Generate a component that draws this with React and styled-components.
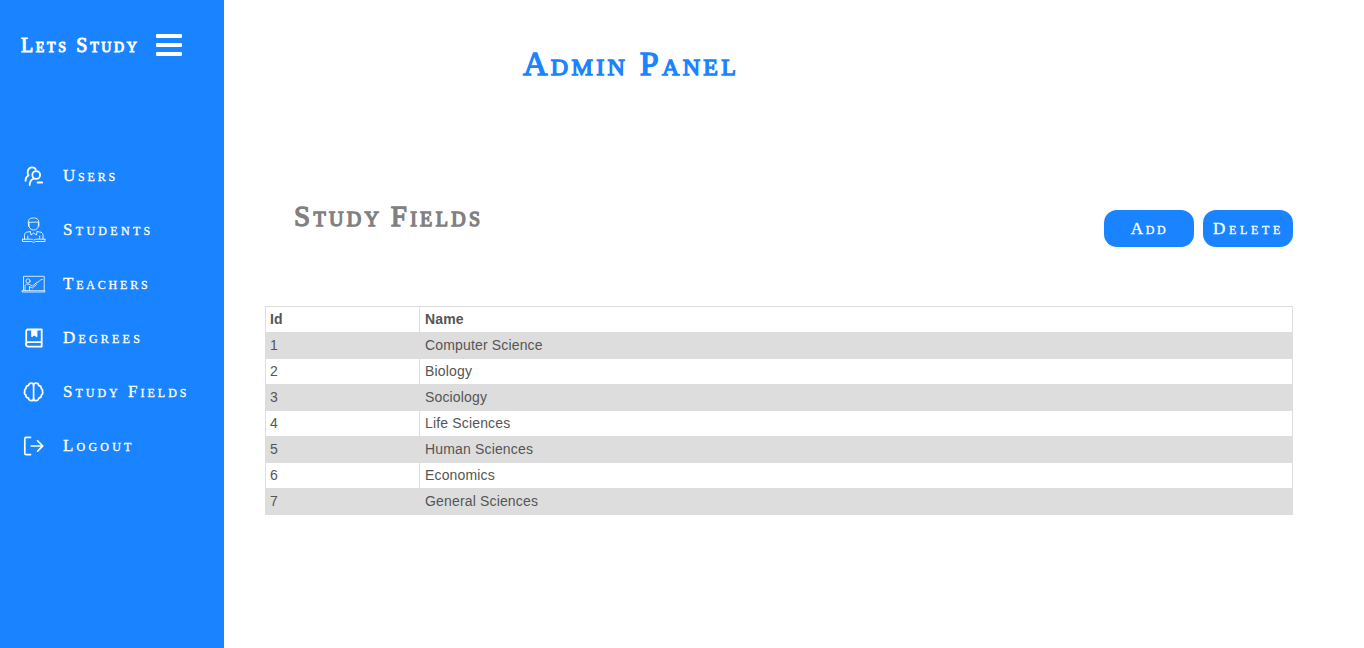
import React from 'react';
import styled, { createGlobalStyle } from 'styled-components';

const BLUE = '#1a83ff';

const GlobalStyle = createGlobalStyle`
  * { box-sizing: border-box; }
  html, body { margin: 0; padding: 0; background: #fff; overflow: hidden; }
`;

const Page = styled.div`
  display: flex;
  width: 100%;
  height: 100vh;
`;

const Sidebar = styled.aside`
  flex: 0 0 224px;
  background: ${BLUE};
  color: #fff;
`;

const Brand = styled.div`
  display: flex;
  align-items: center;
  height: 88px;
  padding-left: 21px;
`;

const Caps = styled.span`
  font-family: 'Liberation Serif', serif;
  font-variant: small-caps;
  font-weight: 400;
  white-space: nowrap;
  line-height: 1;
  font-size: ${(p) => p.$size}px;
  letter-spacing: ${(p) => p.$spacing}px;
  word-spacing: ${(p) => p.$word || 0}px;
  -webkit-text-stroke: ${(p) => p.$stroke || 0.3}px currentColor;
`;

const BrandName = styled(Caps)`
  width: 135px;
  padding-top: 1px;
`;

const MenuIcon = styled.div`
  display: flex;
  flex-direction: column;
  justify-content: space-between;
  width: 26px;
  height: 22px;
  margin-top: 1px;
  & > i {
    height: 4px;
    background: #fff;
    border-radius: 1px;
  }
`;

const Nav = styled.nav`
  display: flex;
  flex-direction: column;
  margin-top: 60px;
`;

const NavItem = styled.a`
  display: flex;
  align-items: center;
  height: 54px;
  padding-left: 21px;
  color: #fff;
`;

const Icon = styled.svg`
  width: 26px;
  height: 28px;
  margin: 1px 16px 0 0;
  fill: none;
  stroke: #fff;
  stroke-width: ${(p) => p.$stroke || 2};
  stroke-linecap: round;
  stroke-linejoin: round;
`;

const Main = styled.main`
  flex: 1;
  padding: 0 71px 0 41px;
`;

const Title = styled.h1`
  margin: 0;
  height: 92px;
  padding: 47px 0 0 258px;
  line-height: 1;
  font-size: 32px;
  color: ${BLUE};
`;

const Toolbar = styled.div`
  display: flex;
  justify-content: space-between;
  align-items: flex-start;
  height: 214px;
  padding: 108px 0 0 29px;
`;

const Heading = styled.h2`
  margin: 0;
  padding-top: 2px;
  font-size: 28px;
  line-height: 1;
  color: #808080;
`;

const Actions = styled.div`
  display: flex;
  gap: 9px;
  padding-top: 10px;
`;

const Button = styled.button`
  display: flex;
  align-items: center;
  justify-content: center;
  width: 90px;
  height: 37px;
  padding: 0 0 0 1px;
  border: 0;
  border-radius: 13px;
  background: ${BLUE};
  color: #fff;
`;

const Table = styled.table`
  width: 1028px;
  border-collapse: collapse;
  table-layout: fixed;
  font: 14px/17px 'Liberation Sans', Arial, sans-serif;
  letter-spacing: 0.16px;
  color: #555;
`;

const Row = styled.tr`
  height: 26px;
  background: ${(p) => (p.$shaded ? '#ddd' : '#fff')};
`;

const Cell = styled.td`
  width: ${(p) => p.$width || 'auto'};
  height: 26px;
  padding: 0 5px;
  padding-left: ${(p) => (p.$width ? 4 : 5)}px;
  border: 1px solid #ddd;
  text-align: left;
  font-weight: ${(p) => (p.$head ? 700 : 400)};
`;

const UsersIcon = () => (
  <Icon viewBox="0 0 26 28" $stroke={1.8}>
    <circle cx="15.2" cy="13" r="3.9" />
    <path d="M8.7 23c0-3.3 1.5-5.4 4-6.4M4.5 18.8c0-2.6 1-4.4 3-5.3C5.5 10 7 5.3 11.2 5.3c1.6 0 2.8.7 3.5 2M16.5 20.5h4.7" />
  </Icon>
);

const StudentIcon = () => (
  <Icon viewBox="0 0 26 28" $stroke={0.85}>
    <path d="M7.6 8.8C6.2 4.5 8.7 1.8 11 2.2c3-1 8 .4 6.8 5.8M7.6 6.4c3-.2 6-.3 10-.3M8 7v2.3c0 3 2.2 4.7 4.7 4.7s4.7-1.7 4.7-4.7V7M7.5 8.2v2M17.9 8.2v2" />
    <path d="M9.2 15.6l-3.8.6c-1.4.5-1.8 1.5-1.9 3.2V23M16.2 15.6l3.8.6c1.5.5 1.9 1.5 2 3.2V23M9.2 15.6l.8 3.4 2.7-2 2.7 2 .8-3.4M6.8 20v2.5M18.7 20v2.5" />
    <path d="M1.5 23.2h8.7c1.4 0 2 .4 2.5 1 .5-.6 1.1-1 2.5-1h8.8M1.5 23.2v2.3h9.2c.8 0 1 .8 2 .8s1.2-.8 2-.8H24v-2.3" />
  </Icon>
);

const TeacherIcon = () => (
  <Icon viewBox="0 0 26 28" $stroke={0.8}>
    <path d="M2.5 20.5V6.3h20.7v14.2M1.5 20.7h22.3v1.3H1.5z" />
    <circle cx="7" cy="11" r="2.1" />
    <path d="M4 20.5v-4.2c0-1.4 1-2.1 2.2-2.1h2l3 2 3.5-2.8M8.5 16.5v4M8.7 17l2.7 1 4.2-3.6M15 13l3-1.4 1.6-1.8 1.8-.5" />
  </Icon>
);

const DegreeIcon = () => (
  <Icon viewBox="0 0 26 28" $stroke={1.8}>
    <path d="M5.2 20.3V7.2c0-1 .7-1.7 1.7-1.7h13.8v17.1H7.2a2.2 2.2 0 0 1 0-4.5h13.5" />
    <path d="M10.8 5.5v7l2.5-1.7 2.5 1.7v-7z" fill="#fff" strokeWidth="1.2" />
  </Icon>
);

const BrainIcon = () => (
  <Icon viewBox="0 0 26 28" $stroke={1.7}>
    <path d="M12.6 7.2c0-1.2-1-2-2.4-2-1.6 0-2.7 1-2.7 2.4-1.7 0-2.7 1.2-2.5 2.9-1.3.7-1.6 1.9-1.2 3-.7 1.3-.4 2.9 1 3.5-.1 1.7 1 2.8 2.6 3 .2 1.7 1.3 2.7 2.8 2.7 1.4 0 2.4-.8 2.4-2z" />
    <path d="M12.6 7.2c0-1.2 1-2 2.4-2 1.6 0 2.7 1 2.7 2.4 1.7 0 2.7 1.2 2.5 2.9 1.3.7 1.6 1.9 1.2 3 .7 1.3.4 2.9-1 3.5.1 1.7-1 2.8-2.6 3-.2 1.7-1.3 2.7-2.8 2.7-1.4 0-2.4-.8-2.4-2" />
  </Icon>
);

const LogoutIcon = () => (
  <Icon viewBox="0 0 26 28" $stroke={1.7}>
    <path d="M9.5 5.3H5.2c-.9 0-1.4.6-1.4 1.4v14.6c0 .8.5 1.4 1.4 1.4h4.3M10.3 14h11.2M16.6 8.8l5.2 5.2-5.2 5.2" />
  </Icon>
);

const links = [
  { label: 'Users', icon: UsersIcon, spacing: 2.8 },
  { label: 'Students', icon: StudentIcon, spacing: 3.3 },
  { label: 'Teachers', icon: TeacherIcon, spacing: 2.8 },
  { label: 'Degrees', icon: DegreeIcon, spacing: 3.2 },
  { label: 'Study Fields', icon: BrainIcon, spacing: 3 },
  { label: 'Logout', icon: LogoutIcon, spacing: 3.2 },
];

const fields = [
  'Computer Science',
  'Biology',
  'Sociology',
  'Life Sciences',
  'Human Sciences',
  'Economics',
  'General Sciences',
];

export default function App() {
  return (
    <Page>
      <GlobalStyle />
      <Sidebar>
        <Brand>
          <BrandName $size={20} $spacing={2.65} $stroke={1}>Lets Study</BrandName>
          <MenuIcon><i /><i /><i /></MenuIcon>
        </Brand>
        <Nav>
          {links.map(({ label, icon: Glyph, spacing }) => (
            <NavItem key={label}>
              <Glyph />
              <Caps $size={17} $spacing={spacing}>{label}</Caps>
            </NavItem>
          ))}
        </Nav>
      </Sidebar>
      <Main>
        <Title><Caps $size={34} $spacing={3.3} $stroke={1.3}>Admin Panel</Caps></Title>
        <Toolbar>
          <Heading><Caps $size={29} $spacing={3.3} $word={-2} $stroke={1.3}>Study Fields</Caps></Heading>
          <Actions>
            <Button><Caps $size={17} $spacing={2.6}>Add</Caps></Button>
            <Button><Caps $size={17} $spacing={3.7}>Delete</Caps></Button>
          </Actions>
        </Toolbar>
        <Table>
          <thead>
            <Row>
              <Cell as="th" $head $width="154px">Id</Cell>
              <Cell as="th" $head>Name</Cell>
            </Row>
          </thead>
          <tbody>
            {fields.map((name, i) => (
              <Row key={name} $shaded={i % 2 === 0}>
                <Cell $width="154px">{i + 1}</Cell>
                <Cell>{name}</Cell>
              </Row>
            ))}
          </tbody>
        </Table>
      </Main>
    </Page>
  );
}
